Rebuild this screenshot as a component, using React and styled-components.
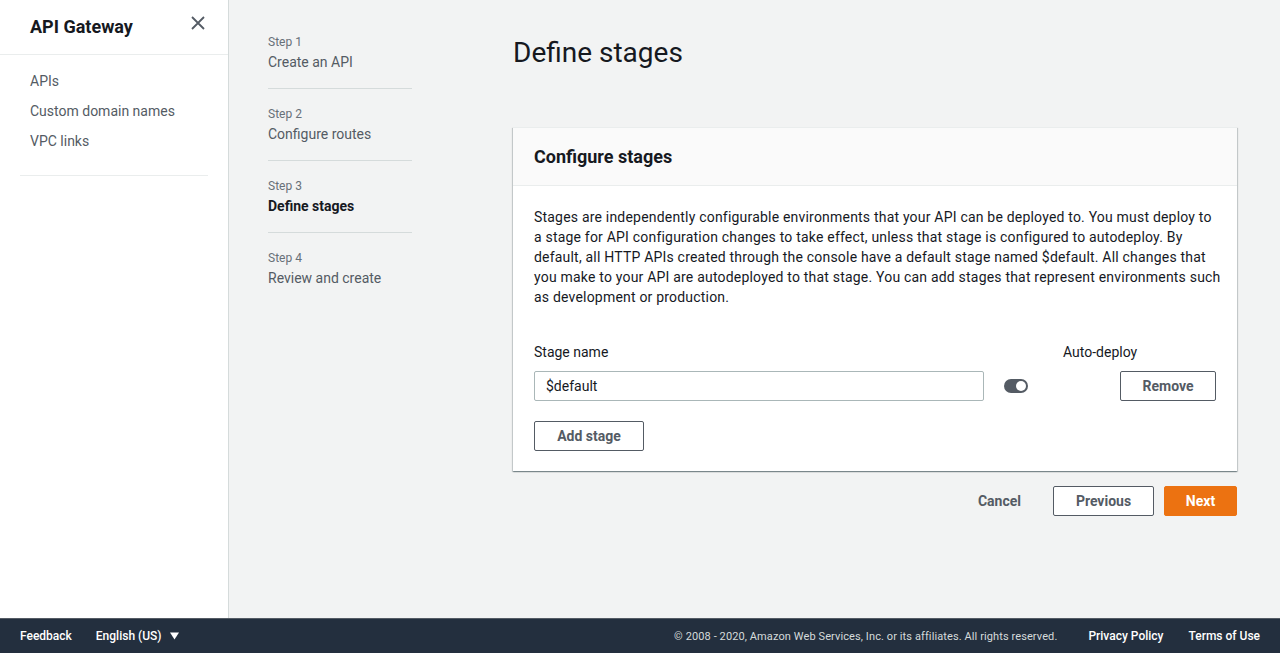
import React, { useState } from 'react';
import styled, { createGlobalStyle } from 'styled-components';

const GlobalStyle = createGlobalStyle`
  html, body {
    margin: 0;
    padding: 0;
    height: 100%;
  }
  body {
    font-family: Roboto, "Liberation Sans", Arial, sans-serif;
    color: #16191f;
    background: #f2f3f3;
  }
  #root {
    height: 100%;
  }
`;

const Page = styled.div`
  height: 100vh;
  display: grid;
  grid-template-rows: 1fr 35px;
`;

const Body = styled.div`
  display: flex;
  min-height: 0;
`;

const Sidebar = styled.nav`
  width: 228px;
  flex-shrink: 0;
  background: #fff;
  border-right: 1px solid #d5dbdb;
`;

const SideHeader = styled.div`
  height: 55px;
  display: flex;
  align-items: center;
  justify-content: space-between;
  padding: 0 22px 0 30px;
  border-bottom: 1px solid #eaeded;
  box-sizing: border-box;
  h2 {
    margin: 0;
    font-size: 18px;
    font-weight: 700;
    color: #16191f;
    position: relative;
    top: -1px;
  }
`;

const CloseButton = styled.button`
  border: none;
  background: none;
  padding: 0;
  width: 16px;
  height: 16px;
  display: flex;
  position: relative;
  top: -4px;
  cursor: pointer;
`;

const NavList = styled.ul`
  list-style: none;
  margin: 0 20px;
  padding: 11px 0 19px 10px;
  border-bottom: 1px solid #eaeded;
  li {
    font-size: 14px;
    line-height: 30px;
    color: #545b64;
  }
`;

const Main = styled.main`
  flex: 1;
  display: flex;
  padding: 33px 43px 0 39px;
`;

const Steps = styled.ol`
  list-style: none;
  margin: 0;
  padding: 0;
  width: 144px;
  flex-shrink: 0;
  margin-right: 101px;
`;

const Step = styled.li`
  padding: 0 0 15px;
  margin-bottom: 16px;
  border-bottom: ${(p) => (p.$last ? 'none' : '1px solid #d5dbdb')};
  small {
    display: block;
    font-size: 12px;
    line-height: 18px;
    color: #687078;
  }
  span {
    display: block;
    font-size: 14px;
    line-height: 22px;
    color: ${(p) => (p.$active ? '#16191f' : '#545b64')};
    font-weight: ${(p) => (p.$active ? 700 : 400)};
  }
`;

const Content = styled.section`
  flex: 1;
  min-width: 0;
`;

const Title = styled.h1`
  margin: 0 0 54px;
  font-size: 28px;
  line-height: 40px;
  font-weight: 400;
  color: #16191f;
`;

const Card = styled.div`
  background: #fff;
  border-top: 1px solid #eaeded;
  box-shadow: 0 1px 1px 0 rgba(0, 28, 36, 0.3), 1px 1px 1px 0 rgba(0, 28, 36, 0.15),
    -1px 1px 1px 0 rgba(0, 28, 36, 0.15);
`;

const CardHeader = styled.div`
  background: #fafafa;
  height: 57px;
  display: flex;
  align-items: center;
  padding: 0 21px;
  border-bottom: 1px solid #eaeded;
  h2 {
    margin: 0;
    font-size: 18px;
    font-weight: 700;
    color: #16191f;
  }
`;

const CardBody = styled.div`
  padding: 21px 21px 20px 21px;
  p {
    margin: 0 -5px 34px 0;
    font-size: 14px;
    line-height: 20px;
    letter-spacing: 0.2px;
    color: #16191f;
  }
`;

const StageGrid = styled.div`
  display: grid;
  grid-template-columns: 450px 64px 1fr 96px;
  align-items: center;
  row-gap: 8px;
`;

const Label = styled.div`
  font-size: 14px;
  line-height: 22px;
  color: #16191f;
  grid-column: ${(p) => p.$col || 'auto'};
  padding-left: ${(p) => p.$indent || '0'};
`;

const TextInput = styled.input`
  height: 30px;
  box-sizing: border-box;
  border: 1px solid #aab7b8;
  border-radius: 2px;
  padding: 0 11px;
  font-family: inherit;
  font-size: 14px;
  color: #16191f;
  outline: none;
`;

const Toggle = styled.button`
  justify-self: center;
  width: 24px;
  height: 14px;
  border-radius: 7px;
  border: none;
  padding: 0;
  background: #545b64;
  position: relative;
  cursor: pointer;
  &::after {
    content: '';
    position: absolute;
    top: 2px;
    left: ${(p) => (p.$on ? '12px' : '2px')};
    width: 10px;
    height: 10px;
    border-radius: 50%;
    background: #fff;
  }
`;

const Button = styled.button`
  height: 30px;
  box-sizing: border-box;
  padding: 0 20px;
  border-radius: 2px;
  border: 1px solid ${(p) => (p.$primary ? '#ec7211' : '#545b64')};
  background: ${(p) => (p.$primary ? '#ec7211' : '#fff')};
  color: ${(p) => (p.$primary ? '#fff' : '#545b64')};
  font-family: inherit;
  font-size: 14px;
  font-weight: 700;
  cursor: pointer;
  width: ${(p) => p.$w || 'auto'};
`;

const LinkButton = styled.button`
  border: none;
  background: none;
  font-family: inherit;
  font-size: 14px;
  font-weight: 700;
  color: #545b64;
  padding: 0 20px;
  height: 30px;
  cursor: pointer;
`;

const AddRow = styled.div`
  margin-top: 20px;
`;

const Actions = styled.div`
  display: flex;
  justify-content: flex-end;
  align-items: center;
  gap: 10px;
  margin-top: 15px;
  ${LinkButton} {
    margin-right: 2px;
  }
`;

const Footer = styled.footer`
  background: #232f3e;
  display: flex;
  align-items: center;
  padding: 0 20px;
  font-size: 12px;
  color: #fff;
  border-top: 1px solid #545b64;
  box-sizing: border-box;
`;

const FooterLeft = styled.div`
  display: flex;
  align-items: center;
  gap: 24px;
  flex: 1;
  span {
    font-weight: 500;
  }
`;

const Lang = styled.span`
  display: flex;
  align-items: center;
  gap: 8px;
`;

const FooterRight = styled.div`
  display: flex;
  align-items: center;
  gap: 25px;
  a {
    color: #fff;
    text-decoration: none;
    font-weight: 500;
  }
`;

const Copyright = styled.span`
  font-size: 11px;
  letter-spacing: 0.1px;
  color: #d5dbdb;
  margin-right: 6px;
`;

const steps = [
  { n: 1, label: 'Create an API' },
  { n: 2, label: 'Configure routes' },
  { n: 3, label: 'Define stages', active: true },
  { n: 4, label: 'Review and create' },
];

export default function App() {
  const [autoDeploy, setAutoDeploy] = useState(true);
  const [stage, setStage] = useState('$default');

  return (
    <>
      <GlobalStyle />
      <Page>
        <Body>
          <Sidebar>
            <SideHeader>
              <h2>API Gateway</h2>
              <CloseButton aria-label="Close">
                <svg width="16" height="16" viewBox="0 0 16 16">
                  <path d="M2 2 L14 14 M14 2 L2 14" stroke="#545b64" strokeWidth="1.8" fill="none" />
                </svg>
              </CloseButton>
            </SideHeader>
            <NavList>
              <li>APIs</li>
              <li>Custom domain names</li>
              <li>VPC links</li>
            </NavList>
          </Sidebar>
          <Main>
            <Steps>
              {steps.map((s, i) => (
                <Step key={s.n} $active={s.active} $last={i === steps.length - 1}>
                  <small>Step {s.n}</small>
                  <span>{s.label}</span>
                </Step>
              ))}
            </Steps>
            <Content>
              <Title>Define stages</Title>
              <Card>
                <CardHeader>
                  <h2>Configure stages</h2>
                </CardHeader>
                <CardBody>
                  <p>
                    Stages are independently configurable environments that your API can be deployed to. You must
                    deploy to a stage for API configuration changes to take effect, unless that stage is configured to
                    autodeploy. By default, all HTTP APIs created through the console have a default stage named
                    $default. All changes that you make to your API are autodeployed to that stage. You can add stages
                    that represent environments such as development or production.
                  </p>
                  <StageGrid>
                    <Label $col="1">Stage name</Label>
                    <Label $col="3 / span 2" $indent="15px">Auto-deploy</Label>
                    <TextInput value={stage} onChange={(e) => setStage(e.target.value)} />
                    <Toggle $on={autoDeploy} onClick={() => setAutoDeploy(!autoDeploy)} aria-label="Auto-deploy" />
                    <div />
                    <Button $w="96px">Remove</Button>
                  </StageGrid>
                  <AddRow>
                    <Button $w="110px">Add stage</Button>
                  </AddRow>
                </CardBody>
              </Card>
              <Actions>
                <LinkButton>Cancel</LinkButton>
                <Button $w="101px">Previous</Button>
                <Button $primary $w="73px">Next</Button>
              </Actions>
            </Content>
          </Main>
        </Body>
        <Footer>
          <FooterLeft>
            <span>Feedback</span>
            <Lang>
              <span>English (US)</span>
              <svg width="9" height="8" viewBox="0 0 10 8">
                <path d="M0 0 H10 L5 8 Z" fill="#fff" />
              </svg>
            </Lang>
          </FooterLeft>
          <FooterRight>
            <Copyright>© 2008 - 2020, Amazon Web Services, Inc. or its affiliates. All rights reserved.</Copyright>
            <a href="#privacy">Privacy Policy</a>
            <a href="#terms">Terms of Use</a>
          </FooterRight>
        </Footer>
      </Page>
    </>
  );
}
